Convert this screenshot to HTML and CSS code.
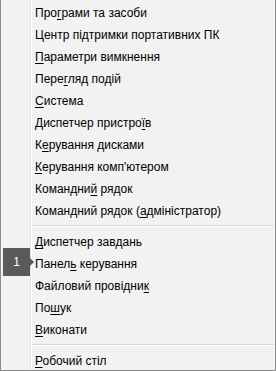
FILE: index.html
```html
<!DOCTYPE html>
<html lang="uk">
<head>
  <meta charset="UTF-8" />
  <title>Меню швидкого доступу</title>
  <link rel="stylesheet" href="styles.css">
</head>
<body>
  <div class="menu">
    <ul class="list">
      <li class="item">Про<u>г</u>рами та засоби</li>
      <li class="item">Центр підтримки портативних ПК</li>
      <li class="item"><u>П</u>араметри вимкнення</li>
      <li class="item">Пере<u>г</u>ляд подій</li>
      <li class="item"><u>С</u>истема</li>
      <li class="item">Диспетчер пристро<u>ї</u>в</li>
      <li class="item">К<u>е</u>рування дисками</li>
      <li class="item"><u>К</u>ерування комп'ютером</li>
      <li class="item">Командни<u>й</u> рядок</li>
      <li class="item">Командний рядок (<u>а</u>дміністратор)</li>
      <li class="sep"></li>
      <li class="item"><u>Д</u>испетчер завдань</li>
      <li class="item">Панел<u>ь</u> керування<span class="badge">1</span></li>
      <li class="item">Файловий провідни<u>к</u></li>
      <li class="item">По<u>ш</u>ук</li>
      <li class="item"><u>В</u>иконати</li>
      <li class="sep"></li>
      <li class="item"><u>Р</u>обочий стіл</li>
    </ul>
  </div>
</body>
</html>
```
FILE: styles.css
```css
body {
  margin: 0;
  background-color: #f2f2f2;
}
.menu {
  width: 276px;
  height: 371px;
  box-sizing: border-box;
  background-color: #f2f2f2;
  border: 1px solid #8a8a8a;
  border-top: none;
  padding-left: 29px;
  padding-right: 1px;
  font-family: "Liberation Sans", Arial, sans-serif;
  font-size: 12px;
  color: #000;
}
.list {
  list-style: none;
  margin: 0;
  padding: 2px 0 0 0;
  height: 100%;
  box-sizing: border-box;
  border-left: 1px solid #e2e2e2;
  box-shadow: inset 1px 0 #fff;
}
.item {
  position: relative;
  height: 22px;
  line-height: 22px;
  padding-left: 4px;
  white-space: nowrap;
}
.item u {
  text-decoration-thickness: 1px;
  text-underline-offset: 2px;
}
.sep {
  height: 1px;
  margin: 3px 0 4px 1px;
  background-color: #d7d7d7;
  border-bottom: 1px solid #fff;
}
.badge {
  position: absolute;
  left: -28px;
  top: -5px;
  width: 27px;
  height: 28px;
  background-color: #5a5a5a;
  color: #fff;
  font-size: 12px;
  line-height: 28px;
  text-align: center;
}
.badge::after {
  content: "";
  position: absolute;
  right: -4px;
  top: 10px;
  border-left: 4px solid #5a5a5a;
  border-top: 4px solid transparent;
  border-bottom: 4px solid transparent;
}
```
